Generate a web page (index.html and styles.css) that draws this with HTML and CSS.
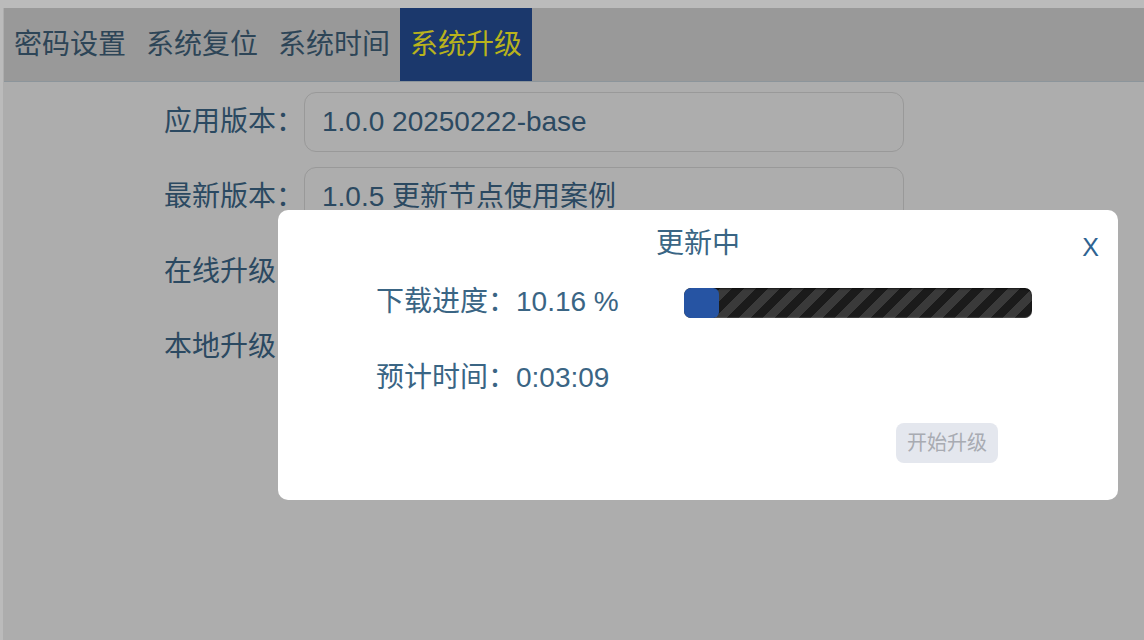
FILE: index.html
```html
<!DOCTYPE html>
<html lang="zh-CN">
<head>
<meta charset="utf-8">
<title>系统升级</title>
<link rel="stylesheet" href="styles.css">
</head>
<body>
<div class="app">
  <nav class="tabbar">
    <div class="tab">密码设置</div>
    <div class="tab">系统复位</div>
    <div class="tab">系统时间</div>
    <div class="tab active">系统升级</div>
  </nav>
  <main class="form">
    <div class="row">
      <span class="label">应用版本：</span>
      <div class="field">1.0.0 20250222-base</div>
    </div>
    <div class="row">
      <span class="label">最新版本：</span>
      <div class="field">1.0.5 更新节点使用案例</div>
    </div>
    <div class="row">
      <span class="label">在线升级：</span>
    </div>
    <div class="row">
      <span class="label">本地升级：</span>
    </div>
  </main>
</div>

<div class="modal">
  <div class="modal-head">
    <span class="modal-title">更新中</span>
    <span class="modal-close">X</span>
  </div>
  <div class="modal-row">
    <span class="mlabel">下载进度：10.16 %</span>
    <div class="progress"><div class="progress-fill" style="width: 10.16%"></div></div>
  </div>
  <div class="modal-row">
    <span class="mlabel">预计时间：0:03:09</span>
  </div>
  <div class="modal-foot">
    <button class="btn" disabled>开始升级</button>
  </div>
</div>
</body>
</html>
```
FILE: styles.css
```css
html, body {
  margin: 0;
  padding: 0;
  height: 100%;
}
body {
  background: #bbbbbb;
  font-family: "Liberation Sans", "Noto Sans CJK SC", sans-serif;
  font-size: 28px;
  padding: 8px 0 0 3px;
  box-sizing: border-box;
  overflow: hidden;
}
.app {
  background: #adadad;
  height: 100%;
  padding-left: 1px;
}
.tabbar {
  display: flex;
  height: 73px;
  background: #999999;
  border-bottom: 1px solid #8c959b;
}
.tab {
  padding: 0 10px;
  line-height: 73px;
  color: #2d4557;
  white-space: nowrap;
}
.tab.active {
  background: #1b386c;
  color: #b9b31c;
}
.form {
  padding: 10px 0 0 160px;
  display: flex;
  flex-direction: column;
  gap: 15px;
}
.row {
  display: flex;
  align-items: center;
  height: 60px;
}
.label {
  width: 140px;
  color: #2b4961;
  line-height: 40px;
  white-space: nowrap;
}
.field {
  box-sizing: border-box;
  width: 600px;
  height: 60px;
  border: 1px solid #999999;
  border-radius: 12px;
  padding-left: 17px;
  line-height: 58px;
  color: #2b4961;
  white-space: nowrap;
}
.modal {
  position: absolute;
  left: 278px;
  top: 210px;
  width: 840px;
  height: 290px;
  box-sizing: border-box;
  background: #ffffff;
  border-radius: 10px;
  display: flex;
  flex-direction: column;
  color: #3a6584;
}
.modal-head {
  position: relative;
  height: 54px;
  padding-top: 14px;
  box-sizing: border-box;
  text-align: center;
}
.modal-title {
  display: block;
  line-height: 40px;
}
.modal-close {
  position: absolute;
  right: 19px;
  top: 17px;
  line-height: 40px;
  font-size: 25px;
  color: #2e6391;
}
.modal-row {
  display: flex;
  align-items: center;
  height: 76px;
  padding-left: 98px;
}
.mlabel {
  width: 308px;
  line-height: 40px;
  white-space: nowrap;
}
.progress {
  width: 348px;
  height: 30px;
  margin-top: 2px;
  border-radius: 7px;
  background-color: #1b1b1b;
  background-image: repeating-linear-gradient(135deg, #1b1b1b 0, #1b1b1b 8.5px, #3a3a3a 8.5px, #3a3a3a 17px);
  box-shadow: inset 0 -1px 1px rgba(255,255,255,0.15), inset 0 1px 2px rgba(0,0,0,0.6);
  overflow: hidden;
}
.progress-fill {
  height: 100%;
  background: #2654a3;
  border-radius: 6px;
}
.modal-foot {
  display: flex;
  justify-content: flex-end;
  padding: 7px 120px 0 0;
}
.btn {
  height: 40px;
  padding: 0 11px;
  border: none;
  border-radius: 8px;
  background: #e4e7ee;
  color: #a8abb2;
  font-family: "Liberation Sans", "Noto Sans CJK SC", sans-serif;
  font-size: 20px;
  line-height: 40px;
}
```
